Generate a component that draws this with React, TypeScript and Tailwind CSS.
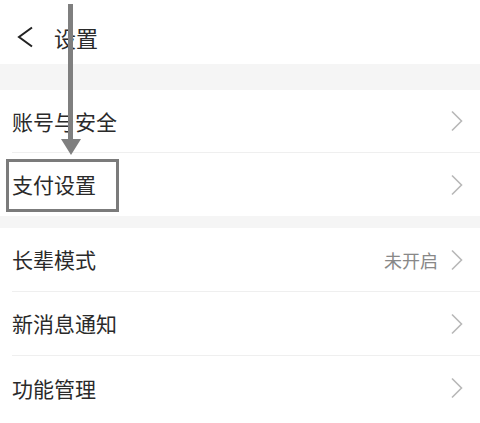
import React from "react";

const Chevron = () => (
  <svg width="14" height="22" viewBox="0 0 14 22" className="shrink-0">
    <path d="M2 1.5 L11.5 11 L2 20.5" fill="none" stroke="#b8b8b8" strokeWidth="1.6" />
  </svg>
);

const Row = ({
  label,
  value,
  border = true,
}: {
  label: string;
  value?: string;
  border?: boolean;
}) => (
  <div className="relative h-[64px] pl-[12px]">
    <div
      className={`flex h-full items-center pr-[16px] ${border ? "border-b border-[#efefef]" : ""}`}
    >
      <span className="flex-1 text-[21px] leading-none text-[#2a2a2a]">{label}</span>
      {value && <span className="mr-[12px] text-[18px] leading-none text-[#888]">{value}</span>}
      <Chevron />
    </div>
  </div>
);

export default function App() {
  return (
    <div
      className="relative h-[423px] w-[480px] overflow-hidden bg-white"
      style={{ fontFamily: '"Noto Sans CJK SC", "Noto Sans", sans-serif' }}
    >
      <div className="flex h-[64px] items-center pt-[10px]">
        <svg width="18" height="22" viewBox="0 0 18 22" className="ml-[16px]">
          <path d="M16 1.5 L3 11 L16 20.5" fill="none" stroke="#222" strokeWidth="2" />
        </svg>
        <span className="ml-[20px] text-[22px] leading-none text-[#2a2a2a]">设置</span>
      </div>
      <div className="h-[26px] bg-[#f5f5f5]" />
      <div className="h-[63px] pl-[12px]">
        <div className="flex h-full items-center border-b border-[#efefef] pr-[16px]">
          <span className="flex-1 text-[21px] leading-none text-[#2a2a2a]">账号与安全</span>
          <Chevron />
        </div>
      </div>
      <div className="relative h-[63px] pl-[12px]">
        <div className="flex h-full items-center pr-[16px]">
          <span className="flex-1 text-[21px] leading-none text-[#2a2a2a]">支付设置</span>
          <Chevron />
        </div>
        <div className="absolute left-[6px] top-[6px] h-[53px] w-[113px] border-[3px] border-[#7b7b7b]" />
      </div>
      <div className="h-[12px] bg-[#f5f5f5]" />
      <Row label="长辈模式" value="未开启" />
      <Row label="新消息通知" />
      <Row label="功能管理" border={false} />
      <svg
        className="absolute left-[60px] top-0"
        width="22"
        height="158"
        viewBox="0 0 22 158"
      >
        <rect x="8" y="4" width="5" height="138" fill="#7f7f7f" />
        <path d="M1 139 L21 139 L11 155 Z" fill="#7f7f7f" />
      </svg>
    </div>
  );
}
